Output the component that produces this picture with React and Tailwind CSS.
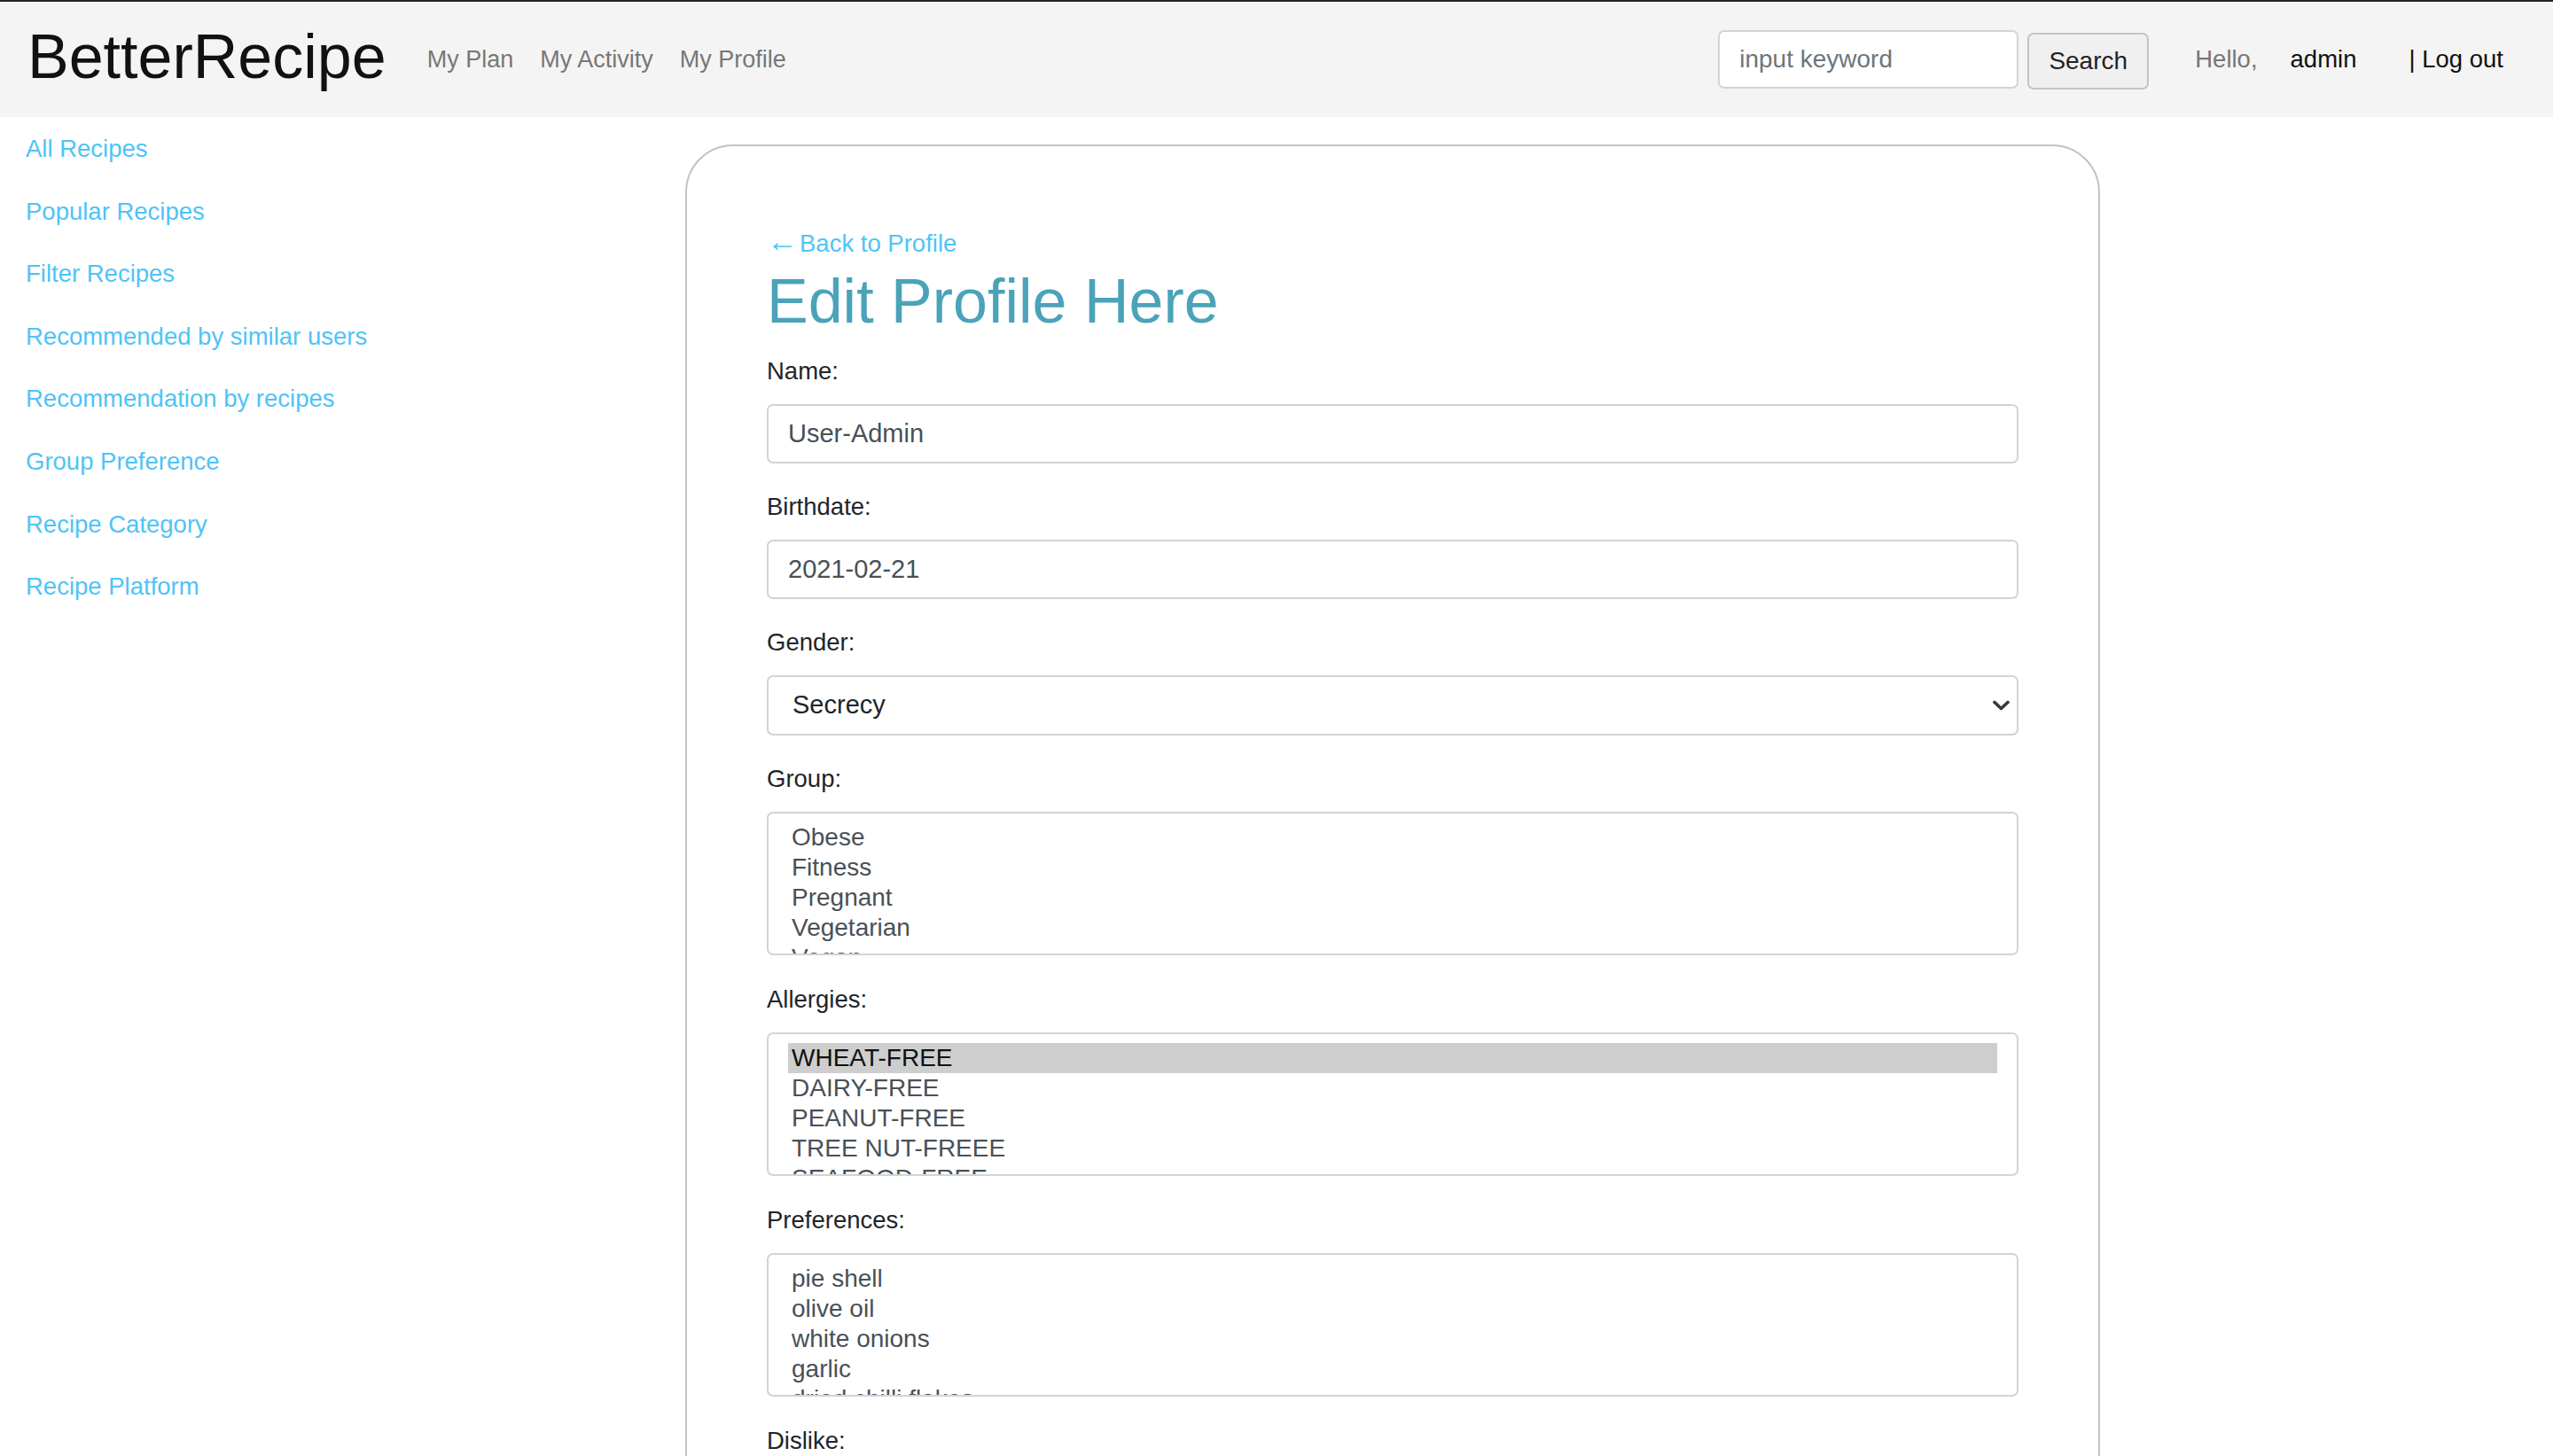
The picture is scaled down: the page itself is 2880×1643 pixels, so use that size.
import React from "react";

const sideLinks = [
  "All Recipes",
  "Popular Recipes",
  "Filter Recipes",
  "Recommended by similar users",
  "Recommendation by recipes",
  "Group Preference",
  "Recipe Category",
  "Recipe Platform",
];

function Label({ children }) {
  return (
    <label className="mb-[20px] block text-[27.5px] leading-[34px] text-[#212529]">
      {children}
    </label>
  );
}

function TextField({ label, value }) {
  return (
    <div className="mb-[32px]">
      <Label>{label}</Label>
      <input
        className="block h-[67px] w-full rounded-[7px] border-2 border-[#ced4da] bg-white px-[22px] text-[29px] text-[#495057] outline-none"
        defaultValue={value}
      />
    </div>
  );
}

function ListBox({ label, options, selected }) {
  return (
    <div className="mb-[33px]">
      <Label>{label}</Label>
      <div className="h-[162px] w-full overflow-hidden rounded-[7px] border-2 border-[#ced4da] bg-white px-[22px] pt-[10px]">
        {options.map((o) => (
          <div
            key={o}
            className={
              o === selected
                ? "h-[34px] bg-[#cecece] pl-[4px] text-[28px] leading-[34px] text-[#111]"
                : "h-[34px] pl-[4px] text-[28px] leading-[34px] text-[#495057]"
            }
          >
            {o}
          </div>
        ))}
      </div>
    </div>
  );
}

export default function App() {
  return (
    <div className="min-h-screen bg-white font-['Liberation_Sans',Arial,sans-serif]">
      <header className="flex h-[132px] items-center border-t-2 border-[#222] bg-[#f4f4f4] pl-[31px] pr-[56px]">
        <a className="-mt-[6px] text-[70px] leading-none text-[#111]">BetterRecipe</a>
        <nav className="ml-[46px] flex gap-[30px] text-[27px] text-[#777]">
          <a>My Plan</a>
          <a>My Activity</a>
          <a>My Profile</a>
        </nav>
        <div className="ml-auto flex items-center text-[27.5px]">
          <input
            placeholder="input keyword"
            className="h-[66px] w-[339px] rounded-[7px] border-2 border-[#ced4da] bg-white px-[22px] text-[28px] text-[#495057] outline-none placeholder:text-[#6c757d]"
          />
          <button className="ml-[10px] mt-[4px] h-[64px] w-[137px] rounded-[7px] border-2 border-[#c4c4c4] bg-[#f0f0f0] text-[28px] text-[#222]">
            Search
          </button>
          <span className="ml-[52px] text-[#777]">Hello,</span>
          <span className="ml-[37px] text-[#111]">admin</span>
          <a className="ml-[59px] text-[#111]">| Log out</a>
        </div>
      </header>

      <div className="flex">
        <aside className="w-[773px] shrink-0 pl-[29px] pt-[19px]">
          <ul className="flex flex-col gap-[36.6px]">
            {sideLinks.map((l) => (
              <li key={l}>
                <a className="text-[27.5px] leading-[34px] text-[#4fc3f7]">{l}</a>
              </li>
            ))}
          </ul>
        </aside>

        <main className="mt-[31px] w-[1596px] rounded-[54px] border-2 border-[#c2c2c2] px-[90px] pb-[90px] pt-[94px]">
          <a className="flex items-center text-[27.5px] leading-[32px] text-[#4fc3f7]">
            <span className="mr-[2px] -translate-y-[3px] text-[35px] leading-[32px]">←</span>
            <span>Back to Profile</span>
          </a>
          <h1 className="mt-[8px] text-[70px] leading-[82px] text-[#4aa3b8]">Edit Profile Here</h1>

          <form className="mt-[21px]">
            <TextField label="Name:" value="User-Admin" />
            <TextField label="Birthdate:" value="2021-02-21" />

            <div className="mb-[32px]">
              <Label>Gender:</Label>
              <div className="flex h-[68px] w-full items-center justify-between rounded-[7px] border-2 border-[#ced4da] bg-white pl-[27px] pr-[8px] text-[29px] text-[#212529]">
                <span>Secrecy</span>
                <svg width="19" height="12" viewBox="0 0 19 12" fill="none">
                  <path d="M2 2.5l7.5 7 7.5-7" stroke="#343a40" strokeWidth="3.6" strokeLinecap="round" strokeLinejoin="round" />
                </svg>
              </div>
            </div>

            <ListBox label="Group:" options={["Obese", "Fitness", "Pregnant", "Vegetarian", "Vegan"]} />
            <ListBox
              label="Allergies:"
              options={["WHEAT-FREE", "DAIRY-FREE", "PEANUT-FREE", "TREE NUT-FREEE", "SEAFOOD-FREE"]}
              selected="WHEAT-FREE"
            />
            <ListBox
              label="Preferences:"
              options={["pie shell", "olive oil", "white onions", "garlic", "dried chilli flakes"]}
            />
            <ListBox
              label="Dislike:"
              options={["salt", "sugar", "butter", "milk", "eggs"]}
            />
          </form>
        </main>
      </div>
    </div>
  );
}
